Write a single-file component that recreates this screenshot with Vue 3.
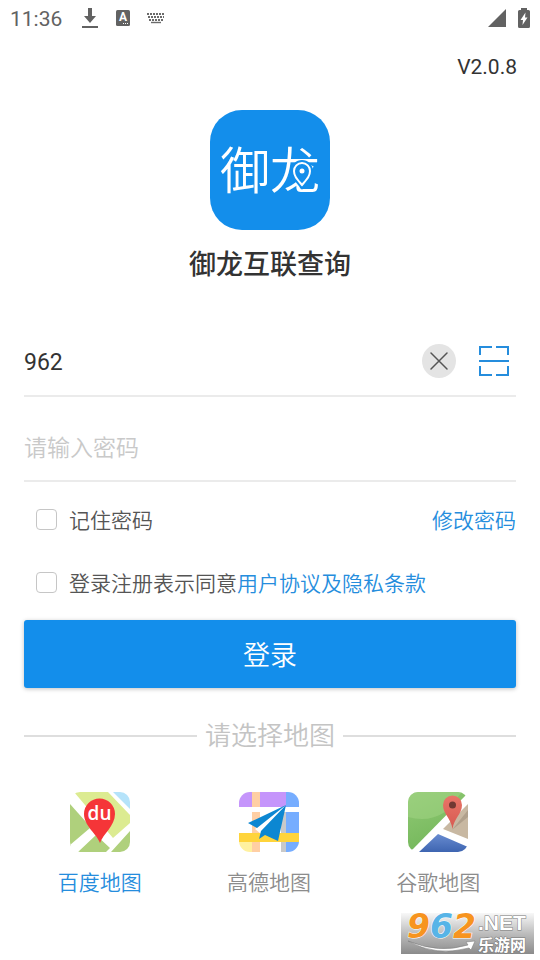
<script setup>
import { ref } from 'vue'

const account = ref('962')
const password = ref('')
const remember = ref(false)
const agreed = ref(false)
const selected = ref('baidu')
const maps = [
  { id: 'baidu', name: '百度地图' },
  { id: 'amap', name: '高德地图' },
  { id: 'google', name: '谷歌地图' },
]
</script>

<template>
  <div class="page">
    <header class="status">
      <span class="clock">11:36</span>
      <svg class="download" width="18" height="22" viewBox="0 0 18 22" aria-hidden="true">
        <path d="M7 1h4v8h4l-6 7-6-7h4z" fill="#626262" />
        <path d="M1 19h16v2H1z" fill="#626262" />
      </svg>
      <svg class="app-mark" width="16" height="18" viewBox="0 0 16 18" aria-hidden="true">
        <rect x="1" y="1" width="14" height="16" rx="1.500" fill="#626262" />
        <text x="8" y="12" text-anchor="middle" class="app-letter">A</text>
        <path d="M8 14h1v1H8zM10 14h1v1h-1zM12 14h1v1h-1z" fill="#fff" />
      </svg>
      <svg class="keyboard" width="20" height="12" viewBox="0 0 20 12" aria-hidden="true">
        <g fill="none" stroke="#6b6b6b" stroke-width="2">
          <path d="M1 2h18" stroke-dasharray="2 1" />
          <path d="M2 5h16" stroke-dasharray="2 1" />
          <path d="M3 8h14" stroke-dasharray="2 1" />
          <path d="M5 10.500h10" stroke-width="1.400" />
        </g>
      </svg>
      <svg class="signal" width="18" height="18" viewBox="0 0 18 18" aria-hidden="true">
        <path d="M18 0v18H0z" fill="#626262" />
      </svg>
      <svg class="battery" width="12" height="20" viewBox="0 0 12 20" aria-hidden="true">
        <path d="M3 0h6v2h1.500q1.500 0 1.500 1.500v15q0 1.500-1.500 1.500h-9Q0 20 0 18.500v-15Q0 2 1.500 2H3z" fill="#626262" />
        <path d="M7.500 4.500 2.500 12H5l-.5 5L9.500 9.500H7z" fill="#fff" />
      </svg>
    </header>

    <p class="version">V2.0.8</p>

    <section class="brand">
      <svg class="logo" width="120" height="120" viewBox="0 0 120 120" role="img" aria-label="御龙">
        <rect width="120" height="120" rx="32" fill="#138eeb" />
        <text x="60" y="79" text-anchor="middle" class="logo-text">御龙</text>
        <path d="M92 75c-5-6-8-9-8-14a8 8 0 0 1 16 0c0 5-3 8-8 14z" fill="#138eeb" stroke="#138eeb" stroke-width="6" />
        <path d="M92 75c-5-6-8-9-8-14a8 8 0 0 1 16 0c0 5-3 8-8 14z" fill="#138eeb" stroke="#fff" stroke-width="2" />
        <circle cx="92" cy="61" r="2.500" fill="#fff" />
      </svg>
      <h1>御龙互联查询</h1>
    </section>

    <form @submit.prevent>
      <div class="field">
        <input v-model="account" type="text" class="account" aria-label="账号" />
        <button type="button" class="clear" aria-label="清除" @click="account = ''">
          <svg width="34" height="34" viewBox="0 0 34 34">
            <circle cx="17" cy="17" r="17" fill="#e4e4e4" />
            <path d="m9 9 16 16M25 9 9 25" stroke="#555" stroke-width="1.500" stroke-linecap="round" />
          </svg>
        </button>
        <button type="button" class="scan" aria-label="扫码">
          <svg width="30" height="30" viewBox="0 0 30 30" fill="none" stroke="#258ddd" stroke-width="2">
            <path d="M1 9V1h12M17 1h12v8M1 20v9h12M17 29h12v-9M0 15h30" />
          </svg>
        </button>
      </div>
      <div class="field second">
        <input v-model="password" type="password" placeholder="请输入密码" aria-label="密码" />
      </div>

      <div class="option first">
        <input id="remember" v-model="remember" type="checkbox" />
        <label for="remember">记住密码</label>
        <a class="change" href="#password">修改密码</a>
      </div>
      <div class="option">
        <input id="agree" v-model="agreed" type="checkbox" />
        <label for="agree">登录注册表示同意</label><a href="#terms">用户协议及隐私条款</a>
      </div>
      <button type="submit" class="login">登录</button>
    </form>

    <h2 class="divider"><span>请选择地图</span></h2>

    <nav class="maps">
      <button v-for="map in maps" :key="map.id" type="button" :class="{ active: selected === map.id }" @click="selected = map.id">
        <svg v-if="map.id === 'baidu'" width="60" height="60" viewBox="0 0 60 60" aria-hidden="true">
          <defs><clipPath id="baidu-tile"><rect width="60" height="60" rx="10" /></clipPath></defs>
          <g clip-path="url(#baidu-tile)">
            <path fill="#fff" d="M0 0h60v60H0z" />
            <path fill="#afd07c" d="M0 12 25 40 0 55z" />
            <path fill="#dceb91" d="M4 0h34l22 23v8L43 46z" />
            <path fill="#b5e3fa" d="M43 0h17v17z" />
            <path fill="#fff" d="m0 53 20-17 6 7L6 60H0z" />
            <path fill="#afd07c" d="M8 60 26 43l14 13-4 4zM60 39v21H41z" />
          </g>
          <path fill="#f53538" d="M30 51C27 42 14 34 14 22a15.500 15.500 0 0 1 31 0c0 12-12 20-15 29z" />
          <text x="29.500" y="28" text-anchor="middle" class="du">du</text>
        </svg>
        <svg v-else-if="map.id === 'amap'" width="60" height="60" viewBox="0 0 60 60" aria-hidden="true">
          <defs><clipPath id="amap-tile"><rect width="60" height="60" rx="11" /></clipPath></defs>
          <g clip-path="url(#amap-tile)">
            <path fill="#fff" d="M0 0h60v60H0z" />
            <path fill="#c595fb" d="M0 0h47v15H0z" />
            <path fill="#76adff" d="M47 0h13v15H47zM47 20h13v40H47z" />
            <path fill="#ffcfa4" d="M13 0h8v15h-8zM13 20h8v40h-8z" />
            <path fill="#c9c9c9" d="M42 20h5v40h-5z" />
            <path fill="#fff1a0" d="M0 50h13v10H0z" />
            <path fill="#ffd43b" d="M0 41h60v9H0z" />
          </g>
          <path fill="#fff" d="M47 13 16 37l6 5z" />
          <path fill="#0c87d2" d="M47 13 9 31l9 5zM47 13 22 39l-2 8 6-4 13 6z" />
        </svg>
        <svg v-else width="60" height="60" viewBox="0 0 60 60" aria-hidden="true">
          <defs>
            <clipPath id="google-tile"><rect width="60" height="60" rx="10" /></clipPath>
            <linearGradient id="grass" x2="0.400" y2="1"><stop stop-color="#91c975" /><stop offset="1" stop-color="#73b75a" /></linearGradient>
            <linearGradient id="water" x2="0" y2="1"><stop stop-color="#688bd0" /><stop offset="1" stop-color="#3e65b1" /></linearGradient>
            <linearGradient id="pin" x2="0" y2="1"><stop stop-color="#e97568" /><stop offset="1" stop-color="#d65a51" /></linearGradient>
          </defs>
          <g clip-path="url(#google-tile)">
            <path fill="#fff" d="M0 0h60v60H0z" />
            <path fill="url(#grass)" d="M0 0h58v3L5 57l-5 3z" />
            <path fill="#a4d685" opacity=".5" d="M0 0h54L37 20Q20 31 0 25z" />
            <path fill="#c8b8a2" d="M60 12 35 37l25 10z" />
            <path fill="#b0a08c" d="m60 18-16 20 16-13z" />
            <path fill="url(#water)" d="m30 42 30 13v5H11z" />
          </g>
          <path fill="url(#pin)" d="M44.500 37C43 26 35 22 35 13a9.500 9.500 0 0 1 19 0c0 9-8 13-9.500 24z" />
          <circle cx="44.500" cy="13" r="3.500" fill="#713832" />
        </svg>
        <span>{{ map.name }}</span>
      </button>
    </nav>

    <svg class="watermark" width="133" height="48" viewBox="0 0 133 48" role="img" aria-label="962.NET 乐游网">
      <defs><linearGradient id="shade" x2="0" y2="1"><stop stop-color="#f8f8f8" /><stop offset=".5" stop-color="#bdbdbd" /><stop offset="1" stop-color="#8b8b8b" /></linearGradient></defs>
      <path fill="url(#shade)" d="M0 7h133v41H0z" />
      <path d="M7 35q31 13 60 4l-2-3 9-1-4 9-2-2Q35 51 7 35z" fill="#fff" stroke="#777" stroke-width=".5" />
      <text x="6" y="32" class="digits"><tspan fill="#f7941f">9</tspan><tspan fill="#57b4e7">6</tspan><tspan fill="#f7941f">2</tspan></text>
      <text x="77" y="24" class="net">.NET</text>
      <text x="77" y="45" class="site">乐游网</text>
    </svg>
  </div>
</template>

<style>
body { margin: 0; background: #fff; }
</style>

<style scoped>
* { box-sizing: border-box; }
.page { position: relative; min-height: 100vh; font-family: Roboto, "Noto Sans CJK SC", sans-serif; font-weight: 350; color: #333; background: #fff; }
button { margin: 0; padding: 0; border: 0; background: none; font: inherit; color: inherit; cursor: pointer; }
svg { display: block; }
a { color: #258ddd; text-decoration: none; }
.status { display: flex; align-items: center; height: 36px; padding: 0 10px; }
.clock { padding-top: 2px; font-size: 21px; line-height: 36px; font-weight: 400; color: #626262; }
.download { margin-left: 19px; }
.app-mark { margin-left: 16px; }
.app-letter { font: bold 12px Roboto, sans-serif; fill: #fff; }
.keyboard { margin-left: 15px; }
.signal { margin-left: auto; }
.battery { margin-left: 12px; }
.version { margin: 16px 23px 0; font-size: 21px; line-height: 30px; font-weight: 400; text-align: right; }
.brand { display: flex; flex-direction: column; align-items: center; padding-top: 28px; }
.logo-text { font: 350 50px "Noto Sans CJK SC", sans-serif; fill: #fff; }
h1 { margin: 15px 0 0; font-size: 27px; line-height: 40px; font-weight: 500; }
form { padding: 41px 24px 0; }
.field { display: flex; align-items: center; height: 71px; border-bottom: 2px solid #ebebeb; }
.second { height: 85px; padding-top: 16px; }
.field input { flex: 1; min-width: 0; height: 42px; padding: 4px 0 0; border: 0; outline: 0; background: none; font: inherit; font-size: 23px; color: #333; }
.field .account { font-weight: 400; }
.field input::placeholder { color: #c9c9c9; opacity: 1; }
.scan { margin: 0 7px 0 23px; }
.option { display: flex; align-items: center; height: 63px; padding-left: 12px; font-size: 21px; line-height: 30px; color: #555; }
.first { margin-top: 7px; }
.option input { appearance: none; width: 21px; height: 21px; margin: 0 12px 2px 0; border: 1px solid #c6c6c6; border-radius: 4px; background: #fff; }
.option input:checked { background: #138eeb; border-color: #138eeb; }
.change { margin-left: auto; }
.login { display: block; width: 100%; height: 68px; margin-top: 5px; padding-bottom: 2px; border-radius: 3px; background: #138eeb; color: #fff; font-size: 27px; box-shadow: 0 1px 4px rgba(0, 0, 0, 0.25); }
.divider { display: flex; align-items: center; gap: 8px; margin: 28px 24px 0; font-size: 26px; line-height: 40px; font-weight: 350; color: #c4c4c4; }
.divider::before, .divider::after { content: ""; flex: 1; height: 2px; background: #dedede; }
.maps { display: grid; grid-template-columns: repeat(3, 1fr); padding: 36px 17px 0 15px; color: #8c8c8c; }
.maps button { display: flex; flex-direction: column; align-items: center; gap: 16px; font-size: 21px; line-height: 30px; }
.maps .active { color: #258ddd; }
.du { font: 600 19px "Open Sans", sans-serif; fill: #fff; }
.watermark { position: absolute; right: 6px; bottom: 6px; }
.digits { font: italic bold 33px "DejaVu Sans", sans-serif; stroke: #fff; stroke-width: 1px; paint-order: stroke; }
.net { font: bold 21px "Liberation Sans", sans-serif; fill: #fff; stroke: #777; stroke-width: 1px; paint-order: stroke; }
.site { font: bold 16px "Noto Sans CJK SC", sans-serif; fill: #fff; stroke: #777; stroke-width: 1px; paint-order: stroke; }
</style>
